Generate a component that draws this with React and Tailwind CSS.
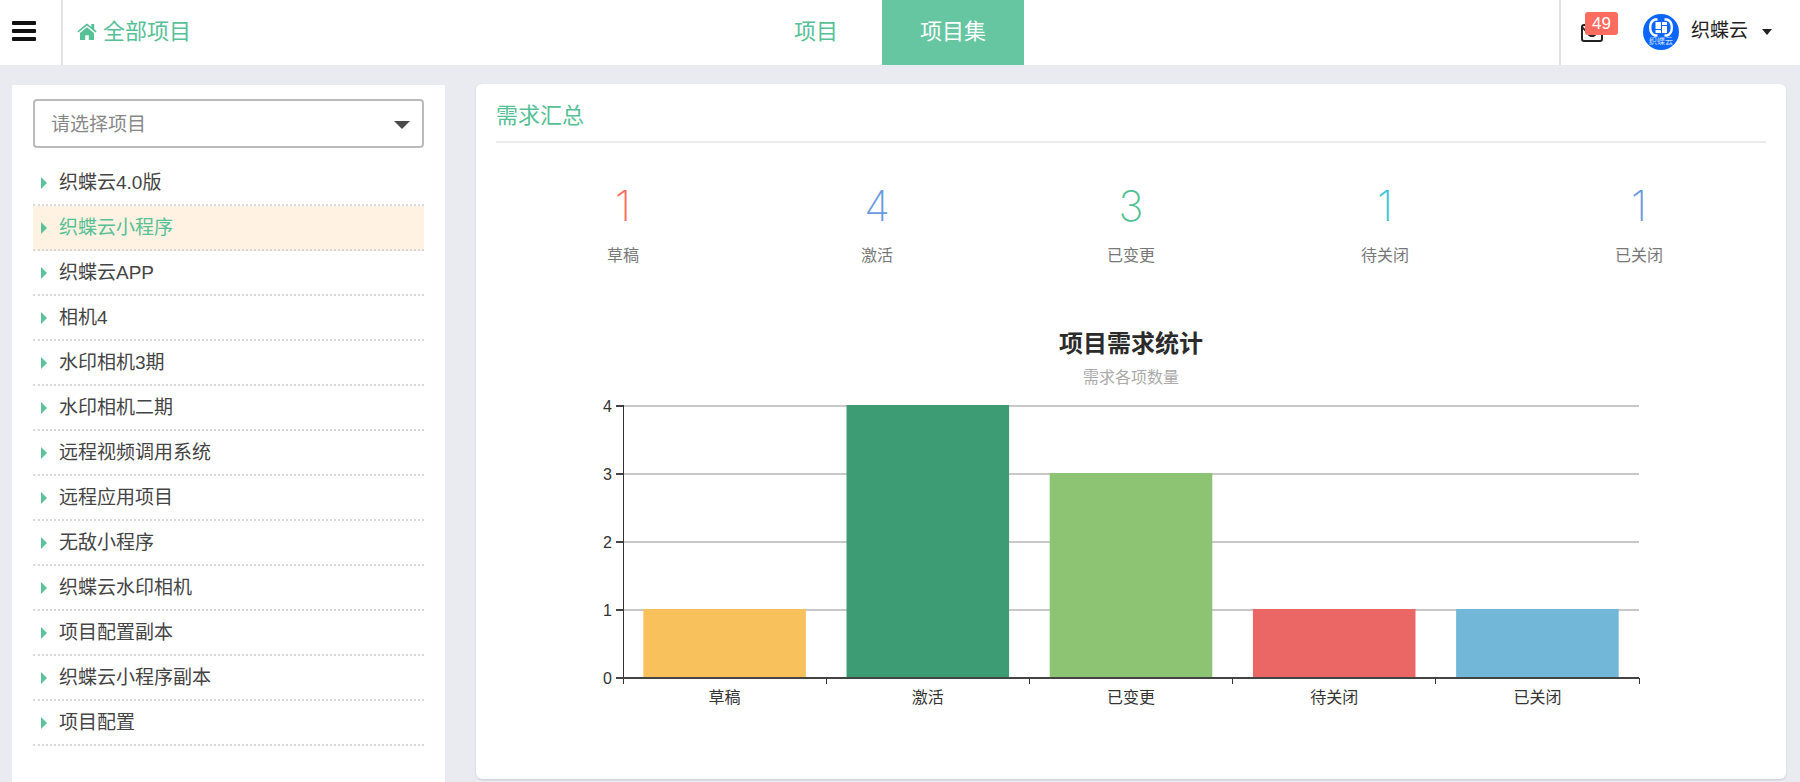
import React, { useState } from 'react';

const projects = [
  '织蝶云4.0版',
  '织蝶云小程序',
  '织蝶云APP',
  '相机4',
  '水印相机3期',
  '水印相机二期',
  '远程视频调用系统',
  '远程应用项目',
  '无敌小程序',
  '织蝶云水印相机',
  '项目配置副本',
  '织蝶云小程序副本',
  '项目配置',
];

const stats = [
  { label: '草稿', value: 1, color: 'text-[#fc6e62]', fill: '#f8c15c' },
  { label: '激活', value: 4, color: 'text-[#6a9be0]', fill: '#3d9c73' },
  { label: '已变更', value: 3, color: 'text-[#4fc195]', fill: '#8dc474' },
  { label: '待关闭', value: 1, color: 'text-[#3fc6d4]', fill: '#ea6766' },
  { label: '已关闭', value: 1, color: 'text-[#6f9ae2]', fill: '#72b7d7' },
];

function Header() {
  return (
    <header className="flex h-[65px] bg-white">
      <div className="flex flex-1">
        <button type="button" aria-label="菜单" className="flex w-[61px] items-center pl-3 pb-1">
          <svg width="24" height="20" viewBox="0 0 24 20" fill="#111">
            <rect width="24" height="4" rx="1" />
            <rect y="8" width="24" height="4" rx="1" />
            <rect y="16" width="24" height="4" rx="1" />
          </svg>
        </button>
        <a href="#" className="flex items-center gap-1.5 border-l-2 border-[#e2e2e5] pb-0.5 pl-3.5 text-[22px] text-[#56c096]">
          <svg width="20" height="18" viewBox="0 0 20 18" fill="currentColor">
            <path d="M10 4.200 3 10v6.400c0 .4.3.7.7.7h4.500v-4.800h3.600v4.800h4.500c.4 0 .7-.3.7-.7V10z" />
            <path d="M19.600 8.300 17.200 6.300V1H14.300v2.900L11.100 1.200c-.7-.6-1.500-.6-2.200 0L.4 8.300l1 1.200L10 2.400l8.600 7.100z" />
          </svg>
          全部项目
        </a>
      </div>

      <nav className="flex gap-1.5 pr-5 text-[22px]">
        <a href="#" className="flex items-center px-[38px] pb-0.5 text-[#56c096]">项目</a>
        <a href="#" className="flex items-center bg-[#66c6a1] px-[38px] pb-0.5 text-white">项目集</a>
      </nav>

      <div className="flex flex-1 justify-end">
        <div className="flex items-center border-l-2 border-[#e2e2e5] pb-0.5 pl-5 pr-7">
          <button type="button" aria-label="消息" className="relative mr-10">
            <svg width="22" height="18" viewBox="0 0 22 18" fill="none" stroke="#222" className="mt-0.5">
              <rect x="1" y="1" width="20" height="16" rx="2" strokeWidth="2" />
              <path d="M1.500 3.500l5.500 6c2 3.600 6 3.600 8 0l5.500-6" strokeWidth="1.800" />
            </svg>
            <span className="absolute -top-2.5 left-1 h-[23px] w-[33px] rounded-[3px] bg-[#fe6c60] text-center text-[17px] leading-[23px] text-white">
              49
            </span>
          </button>
          <button type="button" className="flex items-center text-[19px] text-[#222]">
            <svg width="36" height="36" viewBox="0 0 36 36" className="mr-3">
              <circle cx="18" cy="18" r="18" fill="#0b66fd" />
              <g fill="none" stroke="#fff" strokeWidth="2.400">
                <path d="M14.500 5.500H12C8.800 6.500 7.200 9.500 7.200 13.500s1.600 7 4.800 8h2.500" />
                <path d="M21.500 5.500H24c3.200 1 4.800 4 4.800 8s-1.600 7-4.800 8h-2.500" />
              </g>
              <g fill="#fff">
                <rect x="12.500" y="8" width="5.500" height="7" rx="0.500" />
                <rect x="19" y="8" width="5" height="3" rx="0.500" />
                <rect x="12.500" y="16" width="5.500" height="3" rx="0.500" />
                <rect x="19" y="12" width="5" height="7" rx="0.500" />
              </g>
              <text x="18" y="30" fill="#cfe0ff" fontSize="8" textAnchor="middle">织蝶云</text>
            </svg>
            织蝶云
            <svg width="10" height="6" viewBox="0 0 10 6" fill="#222" className="ml-3.5">
              <path d="M0 0h10L5 6z" />
            </svg>
          </button>
        </div>
      </div>
    </header>
  );
}

function Sidebar() {
  const [active, setActive] = useState(1);

  return (
    <aside className="mt-5 w-[433px] shrink-0 bg-white px-[21px] pt-3.5">
      <div className="relative">
        <select
          aria-label="请选择项目"
          defaultValue=""
          className="block h-[49px] w-full appearance-none rounded border-2 border-[#bbb] bg-white px-4 pt-1 text-[19px] text-[#888]"
        >
          <option value="">请选择项目</option>
          {projects.map((name) => (
            <option key={name}>{name}</option>
          ))}
        </select>
        <svg width="16" height="8" viewBox="0 0 16 8" fill="#4a4a4a" className="pointer-events-none absolute right-3.5 top-[22px]">
          <path d="M0 0h16L8 8z" />
        </svg>
      </div>

      <ul className="mt-[13px]">
        {projects.map((name, i) => (
          <li key={name}>
            <button
              type="button"
              onClick={() => setActive(i)}
              className={`flex h-[45px] w-full items-center gap-3 border-b-2 border-dotted border-[#d8d8d8] pl-2 text-[19px] ${
                i === active ? 'bg-[#fff2e2] text-[#56c096]' : 'text-[#444]'
              }`}
            >
              <svg width="6" height="12" viewBox="0 0 6 12" fill="#5bc29a">
                <path d="M0 0v12l6-6z" />
              </svg>
              <span className="pt-0.5">{name}</span>
            </button>
          </li>
        ))}
      </ul>
    </aside>
  );
}

// Plot area is 10%..90% of the width, each category takes 16%
function BarChart() {
  const top = 16;
  const step = 68;
  const bottom = top + step * 4;

  return (
    <svg width="100%" height="320" className="block text-[16px]" fill="#333">
      {[4, 3, 2, 1, 0].map((n) => {
        const y = bottom - n * step;
        return (
          <g key={n}>
            {n > 0 && <line x1="10%" x2="90%" y1={y} y2={y} stroke="#c8c8c8" strokeWidth="2" />}
            <svg x="10%" y={y} overflow="visible">
              <line x1="-7" x2="0" y1="0" y2="0" stroke="#444" strokeWidth="2" />
              <text x="-11" y="6" textAnchor="end">{n}</text>
            </svg>
          </g>
        );
      })}

      {stats.map((s, i) => (
        <g key={s.label}>
          <rect
            x={`${11.6 + i * 16}%`}
            y={bottom - s.value * step - 1}
            width="12.8%"
            height={s.value * step + 1}
            fill={s.fill}
          />
          <text x={`${18 + i * 16}%`} y={bottom + 25} textAnchor="middle">{s.label}</text>
        </g>
      ))}

      <g stroke="#333" strokeWidth="2">
        <line x1="10%" x2="10%" y1={top - 1} y2={bottom + 6} strokeWidth="1" shapeRendering="crispEdges" />
        <line x1="10%" x2="90%" y1={bottom} y2={bottom} stroke="#444" />
        {[26, 42, 58, 74, 90].map((x) => (
          <line key={x} x1={`${x}%`} x2={`${x}%`} y1={bottom} y2={bottom + 6} strokeWidth="1" shapeRendering="crispEdges" />
        ))}
      </g>
    </svg>
  );
}

export default function App() {
  return (
    <div className="flex min-h-screen flex-col bg-[#eaebf0] font-['Liberation_Sans','Noto_Sans_CJK_SC',sans-serif]">
      <Header />
      <div className="flex flex-1 pl-3 pr-3.5">
        <Sidebar />
        <main className="ml-[31px] mt-[19px] mb-[3px] flex-1 rounded-md bg-white px-5 shadow-[0_1px_2px_#c9c9d2]">
          <h1 className="h-[59px] border-b-2 border-[#ececec] pt-4 text-[22px] leading-8 text-[#56c096]">需求汇总</h1>

          <div className="grid grid-cols-5 pt-[39px] text-center">
            {stats.map((s) => (
              <div key={s.label}>
                <div className={`font-['Inter',sans-serif] text-[42px] leading-[48px] font-extralight ${s.color}`}>{s.value}</div>
                <div className="mt-3.5 text-[16px] leading-6 text-[#777]">{s.label}</div>
              </div>
            ))}
          </div>

          <section className="pt-[60px] text-center">
            <h2 className="text-[24px] leading-8 font-bold text-[#2b2b2b]">项目需求统计</h2>
            <p className="mt-1.5 text-[16px] leading-6 text-[#aaa]">需求各项数量</p>
            <BarChart />
          </section>
        </main>
      </div>
    </div>
  );
}
